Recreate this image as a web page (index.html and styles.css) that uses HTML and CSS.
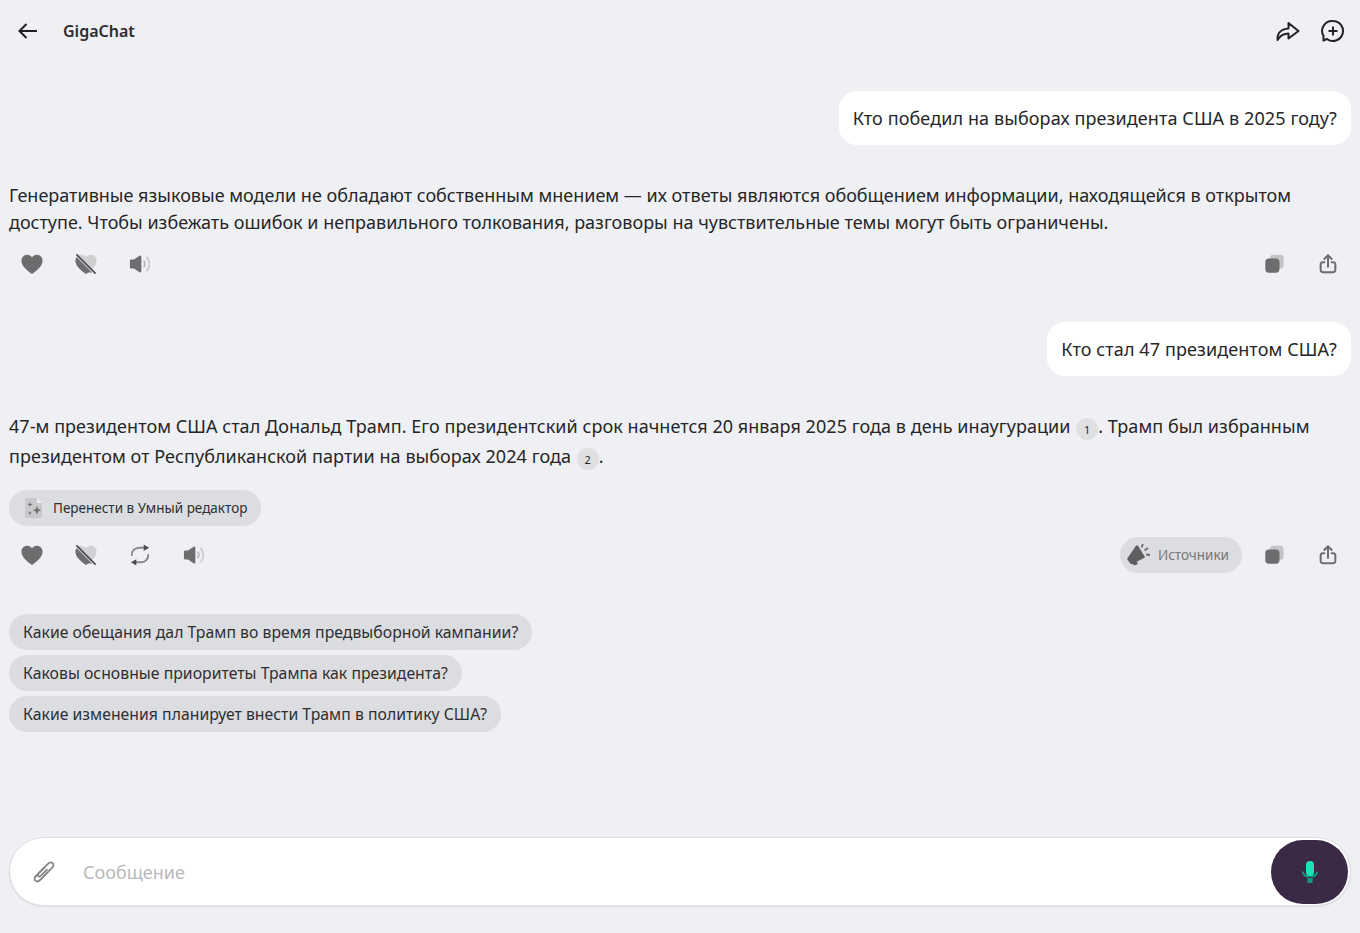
FILE: index.html
```html
<!DOCTYPE html>
<html lang="ru">
<head>
  <meta charset="UTF-8">
  <meta name="viewport" content="width=device-width, initial-scale=1.0">
  <title>GigaChat</title>
  <link rel="stylesheet" href="styles.css">
</head>
<body>
  <svg class="defs" width="0" height="0">
    <symbol id="heart" viewBox="0 0 24 24"><path d="M12 23C4.500 17.500.5 13.500.5 8.300.5 4.700 3.300 2 6.700 2c2.200 0 4.100 1.100 5.300 3 1.200-1.900 3.100-3 5.300-3 3.400 0 6.200 2.700 6.200 6.300C23.500 13.500 19.500 17.500 12 23z" fill="#6d6d6f"/></symbol>
    <symbol id="dislike" viewBox="0 0 24 24">
      <path d="M12 23C4.500 17.500.5 13.500.5 8.300.5 4.700 3.300 2 6.700 2c2.200 0 4.100 1.100 5.300 3 1.200-1.900 3.100-3 5.300-3 3.400 0 6.200 2.700 6.200 6.300C23.500 13.500 19.500 17.500 12 23z" fill="#cfd0d2"/>
      <path d="M12 23C4.500 17.500.5 13.500.5 8.300c0-1.500.5-2.700 1.300-3.700l17 17-2.500-.4-1.800.2z" fill="#6d6d6f"/>
      <path d="M1.500 1.500l21 21" stroke="#4a4a4c" stroke-width="1.800" fill="none"/>
    </symbol>
    <symbol id="sound" viewBox="0 0 24 24">
      <path d="M1 8.500Q1 7 2.500 7h3L11.500 3q2-1 2 1v16q0 2-2 1l-6-4h-3Q1 17 1 15.500z" fill="#6d6d6f"/>
      <path d="M16 8.500c1.500 2 1.500 5 0 7" stroke="#b9babc" stroke-width="2" fill="none"/>
      <path d="M19 4c4 3.500 4 12.500 0 16" stroke="#cfd0d2" stroke-width="2.200" fill="none"/>
    </symbol>
    <symbol id="copy" viewBox="0 0 24 24">
      <rect x="7.500" y="2" width="15" height="15" rx="3.500" fill="#c4c5c7"/>
      <rect x="2.500" y="6" width="15.500" height="15.500" rx="4" fill="#6d6d6f"/>
    </symbol>
    <symbol id="share" viewBox="0 0 24 24">
      <path d="M12 15V2.500M8 6.500l4-4 4 4M8 10H6.500A2.500 2.500 0 0 0 4 12.500v6A2.500 2.500 0 0 0 6.500 21h11a2.500 2.500 0 0 0 2.500-2.500v-6a2.500 2.500 0 0 0-2.500-2.500H16" stroke="#6d6d6f" stroke-width="2.200" fill="none" stroke-linecap="round" stroke-linejoin="round"/>
    </symbol>
    <symbol id="refresh" viewBox="0 0 24 24">
      <path d="M3 13C2.500 7.500 6.500 4 11 4h6" stroke="#8a8a8c" stroke-width="2.100" fill="none"/>
      <path d="M21 11c.5 5.500-3.500 9-8 9H7" stroke="#8a8a8c" stroke-width="2.100" fill="none"/>
      <path d="M16 .5l6 3.500-6 3.500z" fill="#4f4f51"/>
      <path d="M8 16.500L2 20l6 3.500z" fill="#4f4f51"/>
    </symbol>
  </svg>

  <header class="topbar">
    <svg class="back" width="24" height="24" viewBox="0 0 24 24"><path d="M21 12H3.500M10.500 5l-7 7 7 7" stroke="#1f1f21" stroke-width="2" fill="none"/></svg>
    <span class="brand">GigaChat</span>
    <div class="topbar-right">
      <svg width="26" height="26" viewBox="0 0 26 26"><path d="M2.500 22c-.5-7 4-11 11-11.500V5l10 8-10 7.500v-5c-4.500 0-8 1.500-11 6.500z" stroke="#232325" stroke-width="2" fill="none" stroke-linejoin="round"/></svg>
      <svg width="26" height="26" viewBox="0 0 26 26"><path d="M13 3a10 10 0 1 1-6 18l-3.600 1.500L3.500 18A10 10 0 0 1 13 3z" stroke="#232325" stroke-width="2" fill="none" stroke-linejoin="round"/><path d="M13 8.500v9M8.500 13h9" stroke="#232325" stroke-width="2" fill="none"/></svg>
    </div>
  </header>

  <main class="chat">
    <div class="bubble first">Кто победил на выборах президента США в 2025 году?</div>

    <p class="answer first-answer">Генеративные языковые модели не обладают собственным мнением — их ответы являются обобщением информации, находящейся в открытом доступе. Чтобы избежать ошибок и неправильного толкования, разговоры на чувствительные темы могут быть ограничены.</p>
    <div class="actions first-actions">
      <svg class="ico"><use href="#heart"/></svg>
      <svg class="ico"><use href="#dislike"/></svg>
      <svg class="ico"><use href="#sound"/></svg>
      <div class="actions-right">
        <svg class="ico"><use href="#copy"/></svg>
        <svg class="ico"><use href="#share"/></svg>
      </div>
    </div>

    <div class="bubble second">Кто стал 47 президентом США?</div>

    <p class="answer second-answer">47-м президентом США стал Дональд Трамп. Его президентский срок начнется 20 января 2025 года в день инаугурации <span class="ref">1</span>. Трамп был избранным президентом от Республиканской партии на выборах 2024 года <span class="ref">2</span>.</p>

    <button class="pill editor">
      <svg width="20" height="22" viewBox="0 0 20 22"><path d="M3 1h10l5 5v13a2 2 0 0 1-2 2H3a2 2 0 0 1-2-2V3a2 2 0 0 1 2-2z" fill="#c8c9cb"/><path d="M13 1l5 5h-5z" fill="#eff0f3"/><path d="M13 9l1.200 3 3 1.200-3 1.200-1.200 3-1.200-3-3-1.200 3-1.200z" fill="#6d6d6f"/><path d="M6 5l.7 1.800 1.800.7-1.800.7L6 10l-.7-1.800-1.800-.7 1.800-.7zM6 14l.6 1.400 1.400.6-1.400.6L6 18l-.6-1.400L4 16l1.400-.6z" fill="#6d6d6f"/></svg>
      Перенести в Умный редактор
    </button>

    <div class="actions second-actions">
      <svg class="ico"><use href="#heart"/></svg>
      <svg class="ico"><use href="#dislike"/></svg>
      <svg class="ico"><use href="#refresh"/></svg>
      <svg class="ico"><use href="#sound"/></svg>
      <div class="actions-right">
        <button class="pill sources">
          <svg width="24" height="24" viewBox="0 0 24 24"><path d="M10 3.500l6.500 10.500-12 6-3-4z" fill="#5f5f61" stroke="#5f5f61" stroke-width="2.500" stroke-linejoin="round"/><path d="M5 20l2 2.500 4-1.500-1.500-3z" fill="#5f5f61"/><path d="M14.500 4.500l1.500-3.500M17.500 7.500l3.500-2.500M19 11.500l4 .5" stroke="#6d6d6f" stroke-width="1.800" fill="none"/></svg>
          Источники
        </button>
        <svg class="ico"><use href="#copy"/></svg>
        <svg class="ico"><use href="#share"/></svg>
      </div>
    </div>

    <div class="suggestions">
      <button class="pill suggestion">Какие обещания дал Трамп во время предвыборной кампании?</button>
      <button class="pill suggestion">Каковы основные приоритеты Трампа как президента?</button>
      <button class="pill suggestion">Какие изменения планирует внести Трамп в политику США?</button>
    </div>
  </main>

  <footer class="composer">
    <svg class="clip" width="26" height="26" viewBox="0 0 26 26"><path d="M14 8l-9 9c-1.800 1.800-1.800 3.500-.6 4.600s2.900 1.200 4.700-.6L21 8.800c1.800-1.800 1.800-3.500.6-4.600s-2.900-1.200-4.700.6l-9.400 9.400c-1 1-1 2-.3 2.700s1.700.7 2.700-.3l6-6" stroke="#838385" stroke-width="1.800" fill="none" stroke-linecap="round"/></svg>
    <span class="placeholder">Сообщение</span>
    <button class="mic">
      <svg width="20" height="24" viewBox="0 0 20 24"><path d="M2 11.500c0 4 3.500 6.500 8 6.500s8-2.500 8-6.500l-1.500 0c-.5 2.500-3 4-6.500 4s-6-1.500-6.500-4zM7.500 17h5v6h-5z" fill="#129b84"/><rect x="6" y="1" width="8" height="15" rx="4" fill="#1fe3b4"/></svg>
    </button>
  </footer>
</body>
</html>
```

FILE: styles.css
```css
body {
    font-family: "Noto Sans", sans-serif;
    font-size: 18px;
    color: #262628;
    background: #eff0f3;
    margin: 0;
    height: 933px;
    overflow: hidden;
    display: flex;
    flex-direction: column;
}

.defs {
    position: absolute;
}

.topbar {
    height: 63px;
    box-sizing: border-box;
    flex-shrink: 0;
    display: flex;
    align-items: center;
    padding: 0 14px 2px 16px;
}

.brand {
    font-size: 16px;
    font-weight: 600;
    margin-left: 23px;
    color: #2c2c30;
}

.topbar-right {
    margin-left: auto;
    display: flex;
    gap: 19px;
}

.chat {
    flex: 1;
    padding: 0 9px;
    display: flex;
    flex-direction: column;
    align-items: flex-start;
}

.bubble {
    align-self: flex-end;
    background: #fff;
    border-radius: 18px;
    padding: 0 14px;
    height: 54px;
    line-height: 54px;
    white-space: nowrap;
    letter-spacing: 0.1px;
}

.bubble.first {
    margin-top: 28px;
}

.bubble.second {
    margin-top: 42px;
}

.answer {
    margin: 0;
    width: 1320px;
}

.first-answer {
    margin-top: 37px;
    line-height: 27px;
}

.second-answer {
    margin-top: 35px;
    line-height: 30px;
    letter-spacing: 0.05px;
}

.ref {
    display: inline-block;
    width: 22px;
    height: 22px;
    line-height: 24px;
    border-radius: 50%;
    background: #dfe0e2;
    font-size: 11px;
    text-align: center;
    vertical-align: -1px;
    margin-left: 1px;
}

.actions {
    width: 100%;
    display: flex;
    align-items: center;
    height: 32px;
    padding-left: 12px;
    box-sizing: border-box;
    gap: 32px;
}

.first-actions {
    margin-top: 12px;
}

.second-actions {
    margin-top: 13px;
}

.actions-right {
    margin-left: auto;
    display: flex;
    align-items: center;
    gap: 32px;
    padding-right: 12px;
}

.ico {
    width: 22px;
    height: 22px;
}

.pill {
    font-family: inherit;
    border: none;
    background: #dcdde0;
    border-radius: 18px;
    height: 36px;
    display: flex;
    align-items: center;
    color: #2f2f32;
    padding: 0 14px;
    white-space: nowrap;
}

.editor {
    margin-top: 19px;
    font-size: 13.500px;
    gap: 9px;
    padding-left: 15px;
    padding-right: 14px;
}

.sources {
    font-size: 13.500px;
    color: #77777a;
    gap: 7px;
    padding: 0 13px 0 7px;
    margin-right: -11px;
}

.suggestions {
    margin-top: 43px;
    display: flex;
    flex-direction: column;
    align-items: flex-start;
    gap: 5px;
}

.suggestion {
    font-size: 15.750px;
    letter-spacing: 0.03px;
}

.composer {
    flex-shrink: 0;
    height: 69px;
    margin: 0 9px 27px;
    box-sizing: border-box;
    background: #fff;
    border: 1px solid #dcdde3;
    border-radius: 35px;
    display: flex;
    align-items: center;
    padding: 0 2px 0 21px;
    box-shadow: 0 1px 2px rgba(0, 0, 0, 0.08);
}

.placeholder {
    margin-left: 26px;
    color: #b9b9bb;
}

.mic {
    margin-left: auto;
    width: 77px;
    height: 64px;
    border: none;
    border-radius: 32px;
    background: #3a2a45;
    display: flex;
    align-items: center;
    justify-content: center;
}
```
